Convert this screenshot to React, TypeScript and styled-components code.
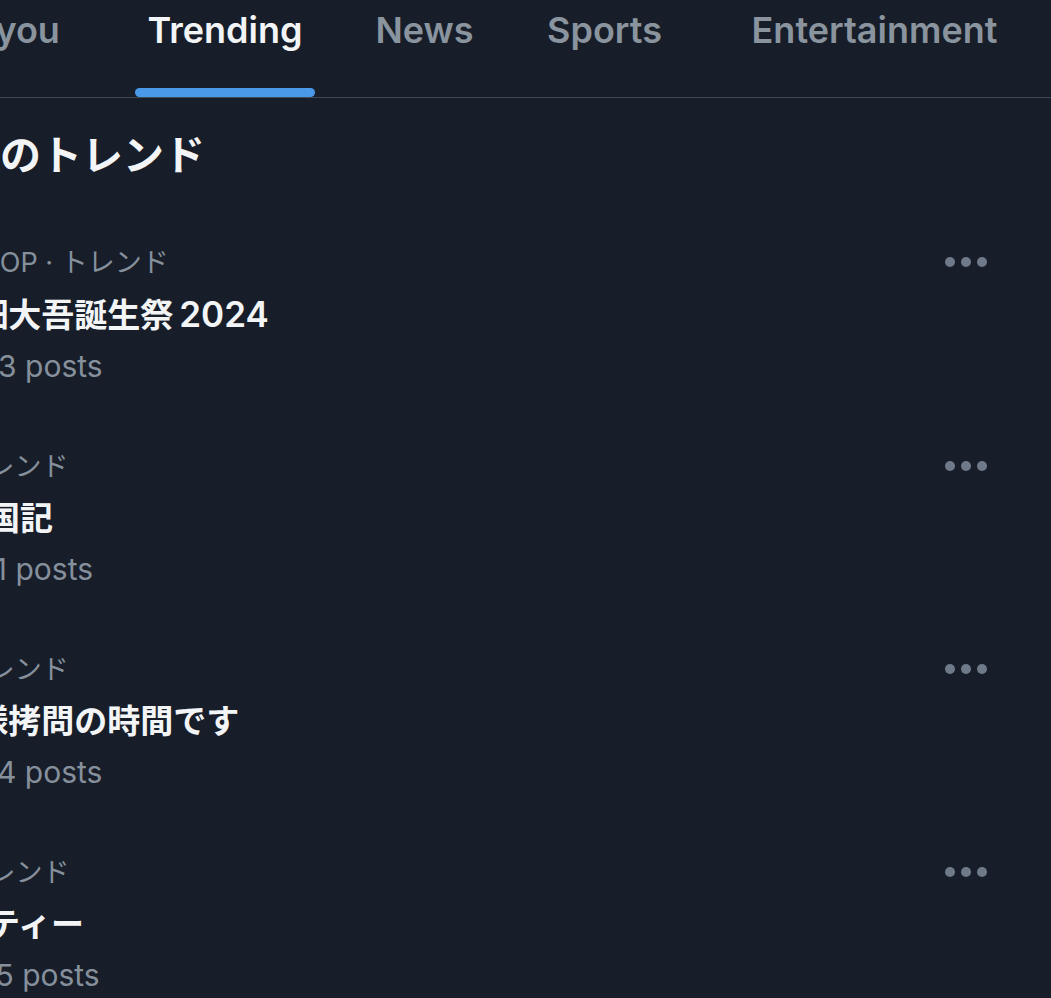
import React from 'react';
import styled, { createGlobalStyle } from 'styled-components';

const GlobalStyle = createGlobalStyle`
  html, body {
    margin: 0;
    padding: 0;
    background: #171e29;
  }
  body {
    overflow: hidden;
    font-family: Inter, "Noto Sans CJK JP", sans-serif;
    -webkit-font-smoothing: antialiased;
  }
`;

const Screen = styled.div`
  width: 1051px;
  height: 998px;
  overflow: hidden;
  background: #171e29;
`;

const TabBar = styled.nav`
  display: flex;
  height: 97px;
  margin-left: -130px;
  border-bottom: 1px solid #3d4955;
`;

const Tab = styled.div<{ $w: number }>`
  flex: 0 0 ${(p) => p.$w}px;
  display: flex;
  justify-content: center;
`;

const TabInner = styled.div`
  display: flex;
  flex-direction: column;
  height: 100%;
`;

const TabLabel = styled.span<{ $active?: boolean }>`
  margin-top: 8px;
  padding: 0 13px;
  font-size: 36px;
  line-height: 44px;
  font-weight: 600;
  white-space: nowrap;
  color: ${(p) => (p.$active ? '#f2f4f6' : '#8a949f')};
`;

const Indicator = styled.div`
  margin-top: auto;
  height: 9px;
  border-radius: 5px;
  background: #4a99e9;
`;

const Feed = styled.main`
  margin-left: -79px;
  padding-right: 64px;
`;

const Heading = styled.h2`
  margin: 33px 0 0 -3px;
  font-size: 41px;
  line-height: 48px;
  font-weight: 700;
  color: #f2f4f6;
  white-space: nowrap;
`;

const TrendList = styled.div`
  display: flex;
  flex-direction: column;
  gap: 65px;
  margin-top: 66px;
`;

const TrendItem = styled.div`
  display: flex;
  align-items: flex-start;
`;

const TrendBody = styled.div`
  flex: 1;
  display: flex;
  flex-direction: column;
  white-space: nowrap;
`;

const Meta = styled.div`
  font-size: 27px;
  line-height: 36px;
  color: #86909c;
`;

const Title = styled.div`
  margin-top: 11px;
  font-size: 33px;
  line-height: 44px;
  font-weight: 600;
  color: #f2f4f6;
`;

const Digits = styled.span`
  margin-left: 6px;
  font-size: 35px;
`;

const Count = styled.div`
  margin-top: 11px;
  font-size: 30px;
  line-height: 36px;
  color: #86909c;
`;

const MoreButton = styled.div`
  display: flex;
  align-items: center;
  gap: 6px;
  height: 36px;
  margin-top: -1px;
`;

const Dot = styled.span`
  width: 10px;
  height: 10px;
  border-radius: 50%;
  background: #6e7a89;
`;

const TABS = [
  { label: 'For you', w: 250 },
  { label: 'Trending', w: 210, active: true },
  { label: 'News', w: 189 },
  { label: 'Sports', w: 171 },
  { label: 'Entertainment', w: 369 },
];

const TRENDS = [
  { meta: '1 · K-POP · トレンド', title: '#西畑大吾誕生祭', year: '2024', count: '12,483 posts' },
  { meta: '2 · トレンド', title: '十二国記', count: '10,571 posts' },
  { meta: '3 · トレンド', title: '#姫様拷問の時間です', count: '18,204 posts' },
  { meta: '4 · トレンド', title: 'パーティー', count: '16,325 posts' },
];

export default function App() {
  return (
    <Screen>
      <GlobalStyle />
      <TabBar>
        {TABS.map((tab) => (
          <Tab key={tab.label} $w={tab.w}>
            <TabInner>
              <TabLabel $active={tab.active}>{tab.label}</TabLabel>
              {tab.active && <Indicator />}
            </TabInner>
          </Tab>
        ))}
      </TabBar>
      <Feed>
        <Heading>日本のトレンド</Heading>
        <TrendList>
          {TRENDS.map((t, i) => (
            <TrendItem key={i}>
              <TrendBody>
                <Meta>{t.meta}</Meta>
                <Title>
                  {t.title}
                  {t.year && <Digits>{t.year}</Digits>}
                </Title>
                <Count>{t.count}</Count>
              </TrendBody>
              <MoreButton>
                <Dot />
                <Dot />
                <Dot />
              </MoreButton>
            </TrendItem>
          ))}
        </TrendList>
      </Feed>
    </Screen>
  );
}
